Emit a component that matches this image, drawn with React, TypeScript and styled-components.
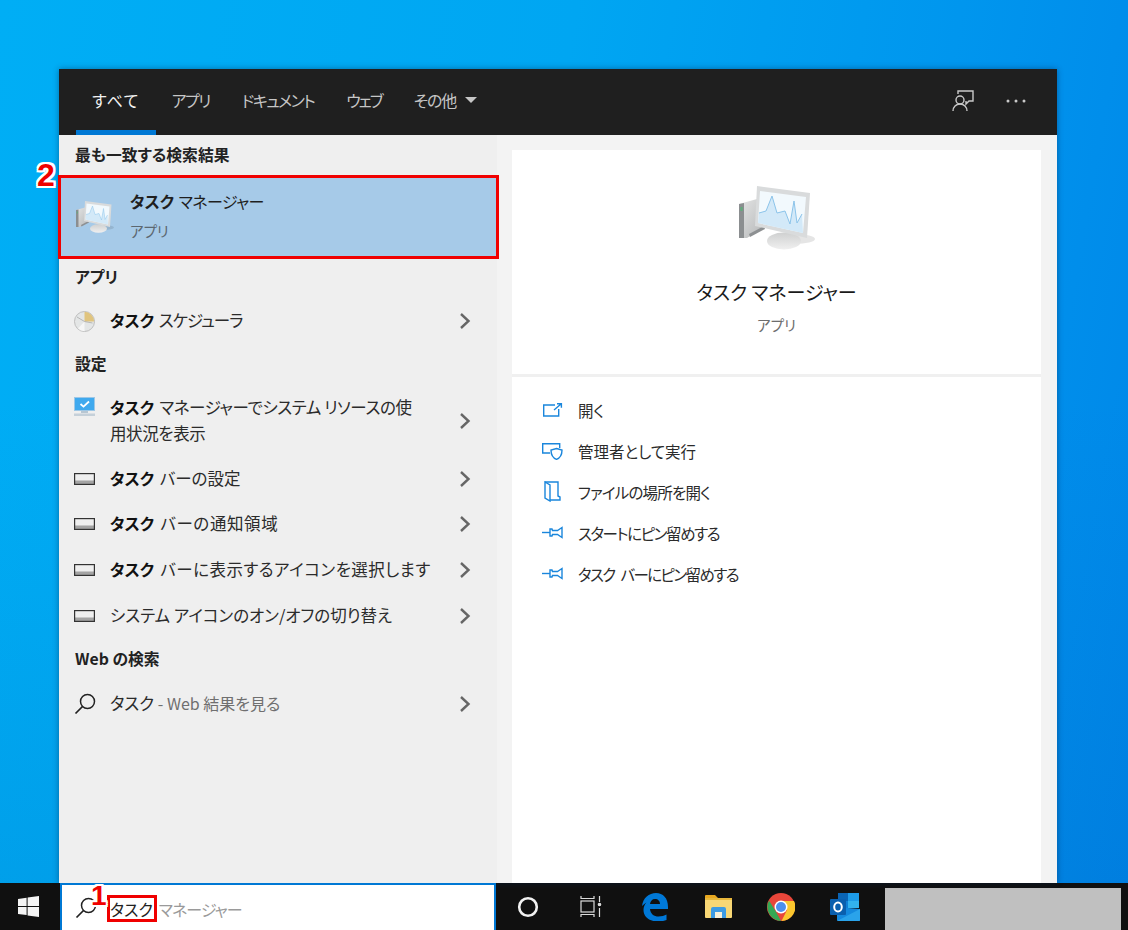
import React from "react";
import styled, { createGlobalStyle } from "styled-components";

const GlobalStyle = createGlobalStyle`
  html, body {
    margin: 0;
    height: 100%;
    overflow: hidden;
  }
  #root {
    height: 100%;
  }
  * {
    box-sizing: border-box;
  }
`;

const Screen = styled.div`
  width: 1128px;
  height: 930px;
  display: flex;
  flex-direction: column;
  font-family: "Noto Sans CJK JP", "Noto Sans", sans-serif;
  font-feature-settings: "palt";
  color: #1f1f1f;
`;

const Desktop = styled.div`
  flex: 1;
  min-height: 0;
  padding: 69px 71px 0 59px;
  display: flex;
  background:
    linear-gradient(180deg, transparent 45%, rgba(0, 70, 160, 0.12) 100%),
    linear-gradient(100deg, #00aef5 0%, #00a6f2 45%, #0096ee 75%, #0086e8 100%);
`;

const Panel = styled.div`
  position: relative;
  flex: 1;
  display: flex;
  flex-direction: column;
  background: #efefef;
  box-shadow: 0 0 6px rgba(0, 30, 70, 0.45);
`;

const TopBar = styled.div`
  height: 66px;
  flex: none;
  display: flex;
  align-items: stretch;
  padding-left: 17px;
  background: #1f1f1f;
`;

const Tab = styled.div<{ $active?: boolean; $ls: number }>`
  display: flex;
  align-items: center;
  gap: 9px;
  padding: 0 16px;
  font-size: 16px;
  letter-spacing: ${(p) => p.$ls}px;
  color: ${(p) => (p.$active ? "#f2f2f2" : "#c6c6c6")};
  border-bottom: 5px solid ${(p) => (p.$active ? "#0078d4" : "transparent")};
`;

const Caret = styled.span`
  width: 0;
  height: 0;
  border-left: 6px solid transparent;
  border-right: 6px solid transparent;
  border-top: 6px solid #c6c6c6;
`;

const TopActions = styled.div`
  margin-left: auto;
  display: flex;
  align-items: center;
  gap: 32px;
  padding: 0 31px 3px 0;
`;

const Columns = styled.div`
  flex: 1;
  min-height: 0;
  display: flex;
`;

const LeftColumn = styled.div`
  width: 438px;
  flex: none;
  display: flex;
  flex-direction: column;
`;

const Heading = styled.div<{ $h: number }>`
  height: ${(p) => p.$h}px;
  display: flex;
  align-items: center;
  padding: 0 0 3px 16px;
  font-size: 15.8px;
  font-weight: 700;
  color: #222;
`;

const BestMatch = styled.div`
  position: relative;
  height: 82px;
  display: flex;
  align-items: center;
  gap: 15px;
  padding: 0 0 0 16px;
  background: #a6cae8;

  &::after {
    content: "";
    position: absolute;
    inset: -1px -2px -1px -1px;
    border: 3px solid #f00000;
  }
`;

const BestText = styled.div`
  display: flex;
  flex-direction: column;
  gap: 6px;
  padding-bottom: 2px;
  font-size: 16px;
  line-height: 24px;
  word-spacing: 1px;
`;

const BestName = styled.span`
  letter-spacing: -0.6px;
`;

const BestSub = styled.div`
  font-size: 14.5px;
  line-height: 24px;
  color: #5c6770;
`;

const Row = styled.div<{ $h?: number }>`
  height: ${(p) => p.$h ?? 46}px;
  display: flex;
  align-items: center;
  padding: 0 26px 0 15px;
`;

const RowIcon = styled.div<{ $top?: boolean }>`
  width: 36px;
  flex: none;
  display: flex;
  align-self: ${(p) => (p.$top ? "flex-start" : "center")};
  margin-top: ${(p) => (p.$top ? "11px" : "0")};
`;

const RowLabel = styled.div<{ $ls?: number }>`
  flex: 1;
  padding-bottom: 2px;
  font-size: 16.5px;
  line-height: 26px;
  letter-spacing: ${(p) => p.$ls ?? 0}px;
  white-space: nowrap;
  color: #2b2b2b;

  b {
    display: inline-block;
    margin-right: 2px;
    font-size: 16px;
    font-weight: 700;
    letter-spacing: 0;
    color: #111;
  }
`;

const WebHint = styled.span`
  font-size: 16px;
  color: #6f6f6f;
`;

const RightColumn = styled.div`
  flex: 1;
  min-width: 0;
  display: flex;
  padding: 15px 16px 0 15px;
  background: #f3f3f3;
`;

const Card = styled.div`
  flex: 1;
  background: #fff;
  display: flex;
  flex-direction: column;
`;

const Hero = styled.div`
  height: 227px;
  flex: none;
  display: flex;
  flex-direction: column;
  align-items: center;
  padding-top: 36px;
  border-bottom: 3px solid #f0f0f0;
`;

const HeroTitle = styled.div`
  margin-top: 26px;
  font-size: 19px;
  line-height: 32px;
  color: #1a1a1a;
`;

const HeroSub = styled.div`
  margin-top: 5px;
  font-size: 14.5px;
  line-height: 24px;
  color: #6d6d6d;
`;

const Actions = styled.div`
  display: flex;
  flex-direction: column;
  padding: 13px 0 0 29px;
`;

const ActionRow = styled.div`
  height: 40.8px;
  display: flex;
  align-items: center;
  gap: 14px;
  color: #2b2b2b;
`;

const ActionLabel = styled.span<{ $ls: number }>`
  font-size: 15.5px;
  letter-spacing: ${(p) => p.$ls}px;
  word-spacing: 4px;
`;

const ActionIcon = styled.div`
  width: 23px;
  display: flex;
  justify-content: center;
`;

const Taskbar = styled.div`
  height: 47px;
  flex: none;
  display: flex;
  background: #101010;
`;

const StartButton = styled.div`
  width: 60px;
  display: flex;
  align-items: center;
  justify-content: center;
  padding-right: 4px;
`;

const SearchBox = styled.div`
  position: relative;
  width: 436px;
  display: flex;
  align-items: center;
  padding: 0 0 0 13px;
  background: #fff;
  border: 2px solid #0078d4;
  border-bottom: none;
`;

const Typed = styled.span`
  margin: 2px 0 0 10px;
  height: 27px;
  padding: 0 1px 0 0;
  display: flex;
  align-items: center;
  border: 3px solid #f00000;
  font-size: 16px;
  color: #222;
`;

const Suggest = styled.span`
  margin: 2px 0 0 2px;
  font-size: 16px;
  letter-spacing: -1px;
  color: #9a9a9a;
`;

const TaskSlot = styled.div`
  width: 63.4px;
  display: flex;
  align-items: center;
  justify-content: center;
`;

const Tray = styled.div`
  width: 236px;
  margin: 5px 0 0 9px;
  background: #c0c0c0;
`;

const Callout = styled.span<{ $size: number }>`
  position: absolute;
  font-family: "Liberation Sans", sans-serif;
  font-weight: 700;
  font-size: ${(p) => p.$size}px;
  line-height: 1;
  color: #f00000;
  text-shadow:
    2px 0 #fff, -2px 0 #fff, 0 2px #fff, 0 -2px #fff,
    2px 2px #fff, -2px 2px #fff, 2px -2px #fff, -2px -2px #fff;
`;

const CalloutTwo = styled(Callout)`
  left: -22px;
  top: 90px;
`;

const CalloutOne = styled(Callout)`
  left: 29px;
  top: -3px;
  z-index: 2;
`;

const Chevron = () => (
  <svg width="12" height="18" viewBox="0 0 12 18" fill="none">
    <path d="M2 2l7.5 7L2 16" stroke="#666" strokeWidth="2.4" />
  </svg>
);

const Magnifier = ({ stroke = "#222" }: { stroke?: string }) => (
  <svg width="22" height="22" viewBox="0 0 22 22" fill="none">
    <circle cx="13.5" cy="8.5" r="7" stroke={stroke} strokeWidth="1.5" />
    <path d="M8.5 13.5L1.5 20.5" stroke={stroke} strokeWidth="1.7" />
  </svg>
);

const TaskbarGlyph = () => (
  <svg width="21" height="12" viewBox="0 0 21 12" fill="none">
    <rect x="1" y="7.5" width="19" height="3.5" fill="#a4a4a4" />
    <rect x="0.6" y="0.6" width="19.8" height="10.8" stroke="#333" strokeWidth="1.2" />
  </svg>
);

const SchedulerGlyph = () => (
  <svg width="21" height="21" viewBox="0 0 21 21">
    <circle cx="10.5" cy="10.5" r="10" fill="#e4e6e6" stroke="#bdbdbd" />
    <path d="M10.5 10.5V.8a9.7 9.7 0 0 1 9.6 9.7z" fill="#e0c47e" />
    <path d="M10.5 10.5L4 17.5a9.7 9.7 0 0 0 6.5 2.7z" fill="#f6f6f6" />
    <path d="M10.5 10.5L3 6M10.5 10.5l8 1.5" stroke="#a9a9a9" strokeWidth="0.8" />
  </svg>
);

const SettingsGlyph = () => (
  <svg width="21" height="20" viewBox="0 0 21 20">
    <rect x="0.5" y="0.5" width="20" height="13" fill="#3fa9ee" stroke="#9dc7e6" />
    <path d="M6.5 7l3 2.6L15 4.5" fill="none" stroke="#fff" strokeWidth="1.8" />
    <rect x="7" y="14" width="7" height="2" fill="#b7c6d2" />
    <rect x="0" y="16.5" width="21" height="2.5" fill="#c5d0d9" />
  </svg>
);

const MonitorGlyph = ({ width }: { width: number }) => (
  <svg width={width} height={(width * 64) / 80} viewBox="0 0 80 64">
    <defs>
      <linearGradient id="tower" x1="0" y1="0" x2="1" y2="1">
        <stop offset="0" stopColor="#e4e5e5" />
        <stop offset="1" stopColor="#b3b5b6" />
      </linearGradient>
      <linearGradient id="stand" x1="0" y1="0" x2="0" y2="1">
        <stop offset="0" stopColor="#cfd0d0" />
        <stop offset="1" stopColor="#f0f0f0" />
      </linearGradient>
    </defs>
    <ellipse cx="58" cy="53" rx="20" ry="5" fill="#000" opacity="0.1" />
    <polygon points="2,18 20,13 30,40 10,52 2,52" fill="url(#tower)" />
    <polygon points="2,18 7,17 7,52 2,52" fill="#8b8e90" />
    <rect x="3.5" y="21" width="2" height="4" fill="#5fae7a" />
    <polygon points="12,48 27,40 28,43 13,51" fill="#8d9092" />
    <ellipse cx="47" cy="55" rx="17" ry="8.5" fill="url(#stand)" />
    <polygon points="20,0 73,7 70,52 18,40" fill="#d9dbdc" />
    <polygon points="23,5 69,11 66,47 21,37" fill="#f2f9fd" />
    <polygon
      points="22,27 29,25 35,10 40,27 48,25 53,38 57,15 60,37 65,28 66,47 21,37"
      fill="#d3e9f8"
    />
    <polyline
      points="22,27 29,25 35,10 40,27 48,25 53,38 57,15 60,37 65,28"
      fill="none"
      stroke="#8cc4ea"
      strokeWidth="1"
    />
  </svg>
);

const OpenGlyph = () => (
  <svg width="20" height="14" viewBox="0 0 20 14" fill="none" stroke="#1a86dc" strokeWidth="1.4">
    <path d="M12 2H.7v11h15V6" />
    <path d="M11 7l7-6M14 .8h4.4v4" />
  </svg>
);

const ShieldGlyph = () => (
  <svg width="21" height="17" viewBox="0 0 21 17" fill="none" stroke="#1a86dc" strokeWidth="1.4">
    <path d="M8 10H.7V.7h17V5" />
    <path d="M14.5 5.500l5.500 1.500c0 5-2 8-5.500 9.300C11 15 9 12 9 7z" />
  </svg>
);

const FolderGlyph = () => (
  <svg width="17" height="21" viewBox="0 0 17 21" fill="none" stroke="#1a86dc" strokeWidth="1.4">
    <path d="M1 1h13v14l2 1v3H6" />
    <path d="M1 1l5 3v16l-5-3z" />
  </svg>
);

const PinGlyph = () => (
  <svg width="21" height="13" viewBox="0 0 21 13" fill="none" stroke="#1a86dc" strokeWidth="1.4">
    <path d="M0 6.500h8" />
    <path d="M8 3h2l.5 1.500h5L20 1.500v10l-4.500-3h-5L10 10H8z" />
  </svg>
);

const FeedbackGlyph = () => (
  <svg width="22" height="22" viewBox="0 0 22 22" fill="none" stroke="#c9c9c9" strokeWidth="1.4">
    <path d="M6 4V1h15v10h-4l-3 3v-3" />
    <circle cx="8" cy="10" r="4" />
    <path d="M1 21c0-4 3-7 7-7s7 3 7 7" />
  </svg>
);

const DotsGlyph = () => (
  <svg width="20" height="4" viewBox="0 0 20 4" fill="#c9c9c9">
    <circle cx="2" cy="2" r="1.5" />
    <circle cx="10" cy="2" r="1.5" />
    <circle cx="18" cy="2" r="1.5" />
  </svg>
);

const WindowsLogo = () => (
  <svg width="21" height="21" viewBox="0 0 21 21" fill="#f4f4f4">
    <path d="M0 3l8.600-1.200v8.100H0zM9.600 1.600L21 0v9.900H9.600zM0 11h8.600v8.100L0 18zM9.600 11H21v10l-11.400-1.600z" />
  </svg>
);

const CortanaGlyph = () => (
  <svg width="22" height="22" viewBox="0 0 22 22" fill="none">
    <circle cx="11" cy="11" r="8.800" stroke="#f2f2f2" strokeWidth="2.600" />
  </svg>
);

const TaskViewGlyph = () => (
  <svg width="22" height="21" viewBox="0 0 22 21" fill="none" stroke="#dcdcdc" strokeWidth="1.200">
    <rect x="1" y="5" width="13" height="11" />
    <path d="M1 0v2.500h13V0M1 21v-2.500h13V21" />
    <path d="M19.500 0v6M19.500 12v9" />
    <circle cx="19.500" cy="8.500" r="1.200" fill="#dcdcdc" />
  </svg>
);

const EdgeGlyph = () => (
  <svg width="27" height="28" viewBox="0 0 27 28">
    <path
      fill="#0078d7"
      d="M1 13C2 5 8 0 15 0c7 0 12 5 12 14v2H9c.5 5 4 7.500 8.500 7.500 3 0 6-.8 8-2v5.500c-2.500 1-5.500 1.500-8.500 1.500C8 28.500 2.500 23.500 2.500 17c0-3 1-5.500 3-7.500C4 10.500 2 12 1 13zm8-2h10c0-3-2-5-5-5s-4.500 2-5 5z"
    />
  </svg>
);

const ExplorerGlyph = () => (
  <svg width="28" height="25" viewBox="0 0 28 25">
    <path d="M1 2a1 1 0 0 1 1-1h9l3 3h-13z" fill="#e8a820" />
    <rect x="1" y="4" width="27" height="20" rx="1" fill="#f8d775" />
    <rect x="1" y="4" width="27" height="2" fill="#e8b83c" />
    <path d="M7 24v-9a2 2 0 0 1 2-2h11a2 2 0 0 1 2 2v9h-4v-6h-7v6z" fill="#3d9be3" />
    <rect x="11" y="18" width="7" height="6" fill="#f8f0d8" />
  </svg>
);

const ChromeGlyph = () => (
  <svg width="28" height="28" viewBox="0 0 28 28">
    <circle cx="14" cy="14" r="14" fill="#e8463a" />
    <path d="M2 7.500L8.500 18l5.500 10A14 14 0 0 1 2 7.500z" fill="#34a853" />
    <path d="M14 8h13a14 14 0 0 1-12.500 20L20 17z" fill="#fbc62e" />
    <circle cx="14" cy="14" r="6.500" fill="#fff" />
    <circle cx="14" cy="14" r="5" fill="#4d8fee" />
  </svg>
);

const OutlookGlyph = () => (
  <svg width="30" height="28" viewBox="0 0 30 28">
    <rect x="8" y="0" width="21" height="8" fill="#0a64b4" />
    <rect x="8" y="8" width="10" height="7" fill="#0e7fd6" />
    <rect x="18" y="0" width="11" height="8" fill="#1d9be8" />
    <rect x="18" y="8" width="11" height="7" fill="#32b2ee" />
    <path d="M7 14l23 2v11a1 1 0 0 1-1 1H8a1 1 0 0 1-1-1z" fill="#1489de" />
    <path d="M7 28l23-12v11a1 1 0 0 1-1 1z" fill="#2aa3ea" />
    <rect x="0" y="6" width="16" height="16" rx="1" fill="#0a5fae" />
    <ellipse cx="8" cy="14" rx="3.800" ry="4.500" fill="none" stroke="#fff" strokeWidth="2" />
  </svg>
);

const tabs = [
  { label: "すべて", ls: 1.3, active: true },
  { label: "アプリ", ls: -1.6 },
  { label: "ドキュメント", ls: -1.5 },
  { label: "ウェブ", ls: -2 },
];

const actions = [
  { icon: <OpenGlyph />, label: "開く", ls: 0 },
  { icon: <ShieldGlyph />, label: "管理者として実行", ls: 0 },
  { icon: <FolderGlyph />, label: "ファイルの場所を開く", ls: -0.8 },
  { icon: <PinGlyph />, label: "スタートにピン留めする", ls: -1.4 },
  { icon: <PinGlyph />, label: "タスク バーにピン留めする", ls: -1.6 },
];

const settings = [
  { bold: "タスク", rest: " バーの設定", ls: 0 },
  { bold: "タスク", rest: " バーの通知領域", ls: 0.6 },
  { bold: "タスク", rest: " バーに表示するアイコンを選択します", ls: 0.5 },
  { bold: "", rest: "システム アイコンのオン/オフの切り替え", ls: 0 },
];

export default function App() {
  return (
    <Screen>
      <GlobalStyle />
      <Desktop>
        <Panel>
          <CalloutTwo $size={32}>2</CalloutTwo>
          <TopBar>
            {tabs.map((t) => (
              <Tab key={t.label} $active={t.active} $ls={t.ls}>
                {t.label}
              </Tab>
            ))}
            <Tab $ls={-1.3}>
              その他
              <Caret />
            </Tab>
            <TopActions>
              <FeedbackGlyph />
              <DotsGlyph />
            </TopActions>
          </TopBar>
          <Columns>
            <LeftColumn>
              <Heading $h={41}>最も一致する検索結果</Heading>
              <BestMatch>
                <MonitorGlyph width={40} />
                <BestText>
                  <div>
                    <b>タスク</b> <BestName>マネージャー</BestName>
                  </div>
                  <BestSub>アプリ</BestSub>
                </BestText>
              </BestMatch>
              <Heading $h={40}>アプリ</Heading>
              <Row>
                <RowIcon>
                  <SchedulerGlyph />
                </RowIcon>
                <RowLabel $ls={-1}>
                  <b>タスク</b> スケジューラ
                </RowLabel>
                <Chevron />
              </Row>
              <Heading $h={42}>設定</Heading>
              <Row $h={70}>
                <RowIcon $top>
                  <SettingsGlyph />
                </RowIcon>
                <RowLabel $ls={-0.4}>
                  <b>タスク</b> マネージャーでシステム リソースの使
                  <br />
                  用状況を表示
                </RowLabel>
                <Chevron />
              </Row>
              {settings.map((s) => (
                <Row key={s.rest} $h={45.67}>
                  <RowIcon>
                    <TaskbarGlyph />
                  </RowIcon>
                  <RowLabel $ls={s.ls}>
                    {s.bold && <b>{s.bold}</b>}
                    {s.rest}
                  </RowLabel>
                  <Chevron />
                </Row>
              ))}
              <Heading $h={42}>Web の検索</Heading>
              <Row>
                <RowIcon>
                  <Magnifier />
                </RowIcon>
                <RowLabel>
                  タスク <WebHint>- Web 結果を見る</WebHint>
                </RowLabel>
                <Chevron />
              </Row>
            </LeftColumn>
            <RightColumn>
              <Card>
                <Hero>
                  <MonitorGlyph width={80} />
                  <HeroTitle>タスク マネージャー</HeroTitle>
                  <HeroSub>アプリ</HeroSub>
                </Hero>
                <Actions>
                  {actions.map((a) => (
                    <ActionRow key={a.label}>
                      <ActionIcon>{a.icon}</ActionIcon>
                      <ActionLabel $ls={a.ls}>{a.label}</ActionLabel>
                    </ActionRow>
                  ))}
                </Actions>
              </Card>
            </RightColumn>
          </Columns>
        </Panel>
      </Desktop>
      <Taskbar>
        <StartButton>
          <WindowsLogo />
        </StartButton>
        <SearchBox>
          <CalloutOne $size={28}>1</CalloutOne>
          <Magnifier />
          <Typed>タスク</Typed>
          <Suggest>マネージャー</Suggest>
        </SearchBox>
        <TaskSlot>
          <CortanaGlyph />
        </TaskSlot>
        <TaskSlot>
          <TaskViewGlyph />
        </TaskSlot>
        <TaskSlot>
          <EdgeGlyph />
        </TaskSlot>
        <TaskSlot>
          <ExplorerGlyph />
        </TaskSlot>
        <TaskSlot>
          <ChromeGlyph />
        </TaskSlot>
        <TaskSlot>
          <OutlookGlyph />
        </TaskSlot>
        <Tray />
      </Taskbar>
    </Screen>
  );
}
